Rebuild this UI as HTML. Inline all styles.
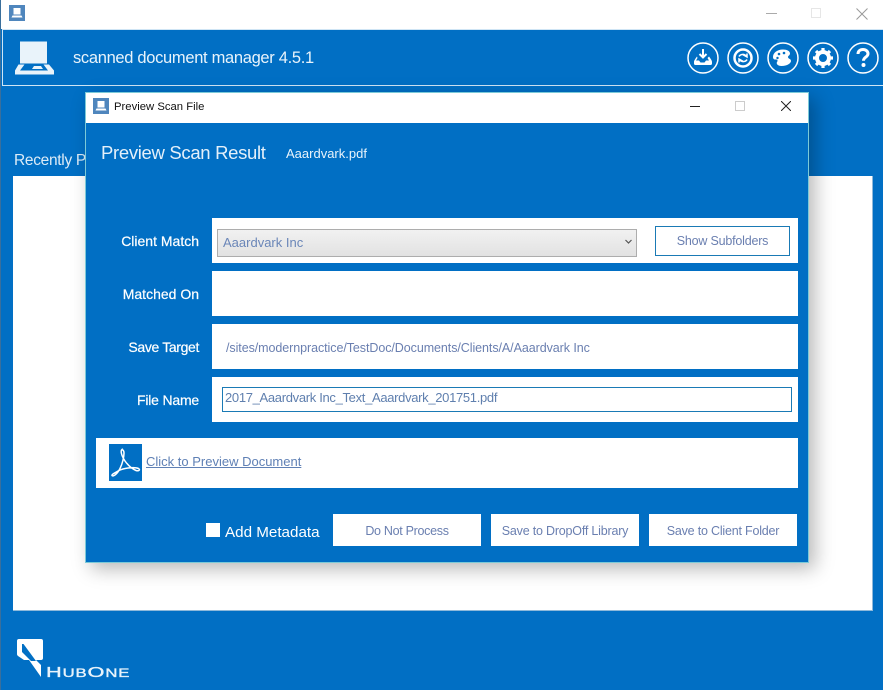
<!DOCTYPE html>
<html><head><meta charset="utf-8">
<style>
html,body{margin:0;padding:0;width:883px;height:690px;overflow:hidden;background:#016fc4}
body{position:relative;font-family:"Liberation Sans",sans-serif}
.a{position:absolute;box-sizing:border-box}
.t{position:absolute;white-space:nowrap;line-height:1}
.w{background:#fff}
.l{color:#fff;font-size:14px;right:684px;-webkit-text-stroke:.2px #fff}
.b{color:#6a7fb0;font-size:12.500px;text-align:center;line-height:34px;letter-spacing:-.2px}
</style></head><body>
<div class="a w" style="left:0;top:0;width:883px;height:29px"></div>
<div class="a" style="left:0;top:0;width:1px;height:690px;background:#3a6f9c"></div>
<div class="a" style="left:9px;top:5px;width:16px;height:16px;background:#4f86bd"></div>
<svg class="a" style="left:9px;top:5px" width="16" height="16" viewBox="0 0 16 16"><path d="M4.500 3h7v6.500h-7zM3.500 10.500h9l1 2h-11z" fill="#fff"/></svg>
<div class="a" style="left:766px;top:13px;width:11px;height:1px;background:#aaa"></div>
<div class="a" style="left:811px;top:8px;width:10px;height:10px;border:1px solid #e6e6e6"></div>
<svg class="a" style="left:856px;top:8px" width="12" height="12" viewBox="0 0 12 12"><path d="M.5.500l11 11M11.500.500l-11 11" stroke="#999" fill="none"/></svg>

<div class="a" style="left:2px;top:29px;width:890px;height:57px;border:1px solid #cfe5f5"></div>
<svg class="a" style="left:13px;top:40px" width="41" height="36" viewBox="0 0 41 36"><path d="M7 1.500h27v22h-27zM5.500 24.500h6l-4.500 6h28l-4.500-6h5.500l5 6v4h-39v-4z" fill="#e9f3fa" fill-rule="evenodd"/><path d="M19 29l2-3h7l2 3z" fill="#e9f3fa"/></svg>
<div class="t" style="left:73px;top:50px;font-size:16.500px;color:#e8f3fb;letter-spacing:-.32px">scanned document manager 4.5.1</div>

<svg class="a" style="left:686px;top:41px" width="197" height="33" viewBox="0 0 197 33" fill="none">
<g stroke="#fff" stroke-width="1.500"><circle cx="17" cy="17" r="15"/><circle cx="57" cy="17" r="15"/><circle cx="97" cy="17" r="15"/><circle cx="137" cy="17" r="15"/><circle cx="177" cy="17" r="15"/></g>
<path d="M17 8v8M13.500 13l3.500 3.500 3.500-3.500" stroke="#fff" stroke-width="2"/>
<path d="M11 15.500c-1.500 2-3 4-3 5.500v1.500c0 1 .5 1.500 1.500 1.500h15c1 0 1.500-.5 1.500-1.500V21c0-1.500-1.500-3.500-3-5.500l-1.500 1.500 1.500 2.500h-3l-1.500 2h-4l-1.500-2h-3l1.500-2.500z" fill="#fff"/>
<circle cx="57" cy="17" r="8.500" stroke="#fff" stroke-width="2.500"/>
<path d="M53 15.500c1-2 4-2.700 6-1.500h-1.500l3.500 2v-3.500M61 18.500c-1 2-4 2.700-6 1.500h1.500L53 18v3.500" stroke="#fff" stroke-width="1.500"/>
<path d="M97 8.500c-6 0-10 3.500-10 7.500 0 3 2.500 2.500 3.500 2.500s1.500 1.500.5 2.500c-1 1.500.5 4 4.500 4 6 0 9.500-3 9.500-5 0-2.500-3-2-3-4 0-1.500 2-1.500 2-3.500 0-2.500-3-4-7-4z" fill="#fff"/>
<circle cx="93" cy="13" r="1.300" fill="#016fc4"/><circle cx="98" cy="12" r="1.300" fill="#016fc4"/><circle cx="91.500" cy="17" r="1.200" fill="#016fc4"/>
<circle cx="137" cy="17" r="6" stroke="#fff" stroke-width="4"/>
<path d="M137 7v4M137 23v4M127 17h4M143 17h4M130 10l2.800 2.800M141.200 21.200l2.800 2.800M144 10l-2.800 2.800M132.800 21.200L130 24" stroke="#fff" stroke-width="3.200"/>
<path d="M172 13c0-3 2.200-4.500 5-4.500s5 1.700 5 4.200c0 3.300-4.500 3.500-4.500 7" stroke="#fff" stroke-width="3"/>
<circle cx="177.500" cy="24" r="2" fill="#fff"/>
</svg>

<div class="t" style="left:14px;top:153px;font-size:15.500px;color:#dcebf7;letter-spacing:-.3px">Recently P</div>
<div class="a w" style="left:13px;top:176px;width:860px;height:435px;border:1px solid #8fb9da;border-top:0;border-left:0"></div>

<svg class="a" style="left:16px;top:638px" width="30" height="42" viewBox="0 0 30 42"><path d="M3 1h22a2 2 0 0 1 2 2v17a2 2 0 0 1-2 2h-5l5 5v12L13 22H8L2 18a2 2 0 0 1-1-2V3a2 2 0 0 1 2-2z" fill="#fff"/><path d="M6 6h1.500L20 23h-5L6 14z" fill="#016fc4"/></svg>
<div class="t" style="left:46px;top:665px;color:#e8f3fb;letter-spacing:.6px;transform:scaleX(1.45);transform-origin:0 0;font-size:15px;-webkit-text-stroke:.35px #e8f3fb">H<span style="font-size:11.500px">UB</span>O<span style="font-size:11.500px">NE</span></div>

<!-- dialog -->
<div class="a" style="left:85px;top:92px;width:724px;height:471px;background:#016fc4;border:1px solid #7ccad8;box-shadow:6px 6px 18px rgba(0,0,0,.28)"></div>
<div class="a w" style="left:85px;top:92px;width:724px;height:31px;border:1px solid #7ccad8;border-bottom:0"></div>
<div class="a" style="left:93px;top:98px;width:16px;height:16px;background:#4f86bd"></div>
<svg class="a" style="left:93px;top:98px" width="16" height="16" viewBox="0 0 16 16"><path d="M4.500 3h7v6.500h-7zM3.500 10.500h9l1 2h-11z" fill="#fff"/></svg>
<div class="t" style="left:114px;top:102px;font-size:11.300px;color:#111">Preview Scan File</div>
<div class="a" style="left:690px;top:106px;width:10px;height:1px;background:#222"></div>
<div class="a" style="left:735px;top:101px;width:10px;height:10px;border:1px solid #ccc"></div>
<svg class="a" style="left:781px;top:101px" width="10" height="10" viewBox="0 0 10 10"><path d="M0 0l10 10M10 0L0 10" stroke="#222" fill="none"/></svg>

<div class="t" style="left:101px;top:144px;font-size:18.500px;color:#e4f0fa;letter-spacing:-.32px">Preview Scan Result</div>
<div class="t" style="left:286px;top:147px;font-size:13px;color:#e8f3fb">Aaardvark.pdf</div>

<div class="a w" style="left:212px;top:218px;width:586px;height:45px"></div>
<div class="a w" style="left:212px;top:271px;width:586px;height:45px"></div>
<div class="a w" style="left:212px;top:324px;width:586px;height:45px"></div>
<div class="a w" style="left:212px;top:377px;width:586px;height:45px"></div>
<div class="t l" style="top:234px">Client Match</div>
<div class="t l" style="top:287px">Matched On</div>
<div class="t l" style="top:340px;letter-spacing:-.35px">Save Target</div>
<div class="t l" style="top:393px;letter-spacing:-.2px">File Name</div>

<div class="a" style="left:217px;top:229px;width:420px;height:28px;background:linear-gradient(#f1f1f1,#e2e2e2);border:1px solid #adadad"></div>
<div class="t" style="left:223px;top:236px;font-size:13px;color:#6a86b8">Aaardvark Inc</div>
<svg class="a" style="left:625px;top:239px" width="7" height="6" viewBox="0 0 7 6"><path d="M.5 1l3 3 3-3" stroke="#555" stroke-width="1.200" fill="none"/></svg>
<div class="a b" style="left:655px;top:226px;width:135px;height:30px;border:1px solid #1a7ab5;line-height:29px;background:#fff">Show Subfolders</div>

<div class="t" style="left:226px;top:342px;font-size:12.500px;color:#6a7fb0;letter-spacing:-.07px">/sites/modernpractice/TestDoc/Documents/Clients/A/Aaardvark Inc</div>
<div class="a" style="left:222px;top:387px;width:570px;height:25px;border:1px solid #1a7ab5"></div>
<div class="t" style="left:225px;top:391px;font-size:13px;color:#5f7fae;letter-spacing:-.32px">2017_Aaardvark Inc_Text_Aaardvark_201751.pdf</div>

<div class="a w" style="left:96px;top:438px;width:702px;height:50px"></div>
<div class="a" style="left:109px;top:444px;width:33px;height:37px;background:#016fc4"></div>
<svg class="a" style="left:109px;top:444px" width="33" height="37" viewBox="0 0 33 37" fill="none"><path d="M13 5.500c-1.500 1-1 5.500 3 11.500 3.500 5 7.500 8 11 9.500 3 1 4.500-1 2.500-2-3.500-1.500-14-1-20.500 2.500-4 2.500-6.500 3.500-6 4.500 1 1.500 5-1 8-7 2.500-5 4-11.500 4-15.500 0-2-1-3.500-2-3z" stroke="#fff" stroke-width="1.500"/></svg>
<div class="t" style="left:146px;top:455px;font-size:13px;color:#5f80b5;text-decoration:underline">Click to Preview Document</div>

<div class="a w" style="left:206px;top:523px;width:14px;height:14px"></div>
<div class="t" style="left:225px;top:525px;font-size:15.200px;color:#fff">Add Metadata</div>
<div class="a w b" style="left:333px;top:514px;width:148px;height:32px;letter-spacing:-.3px">Do Not Process</div>
<div class="a w b" style="left:491px;top:514px;width:148px;height:32px">Save to DropOff Library</div>
<div class="a w b" style="left:649px;top:514px;width:148px;height:32px">Save to Client Folder</div>
</body></html>
